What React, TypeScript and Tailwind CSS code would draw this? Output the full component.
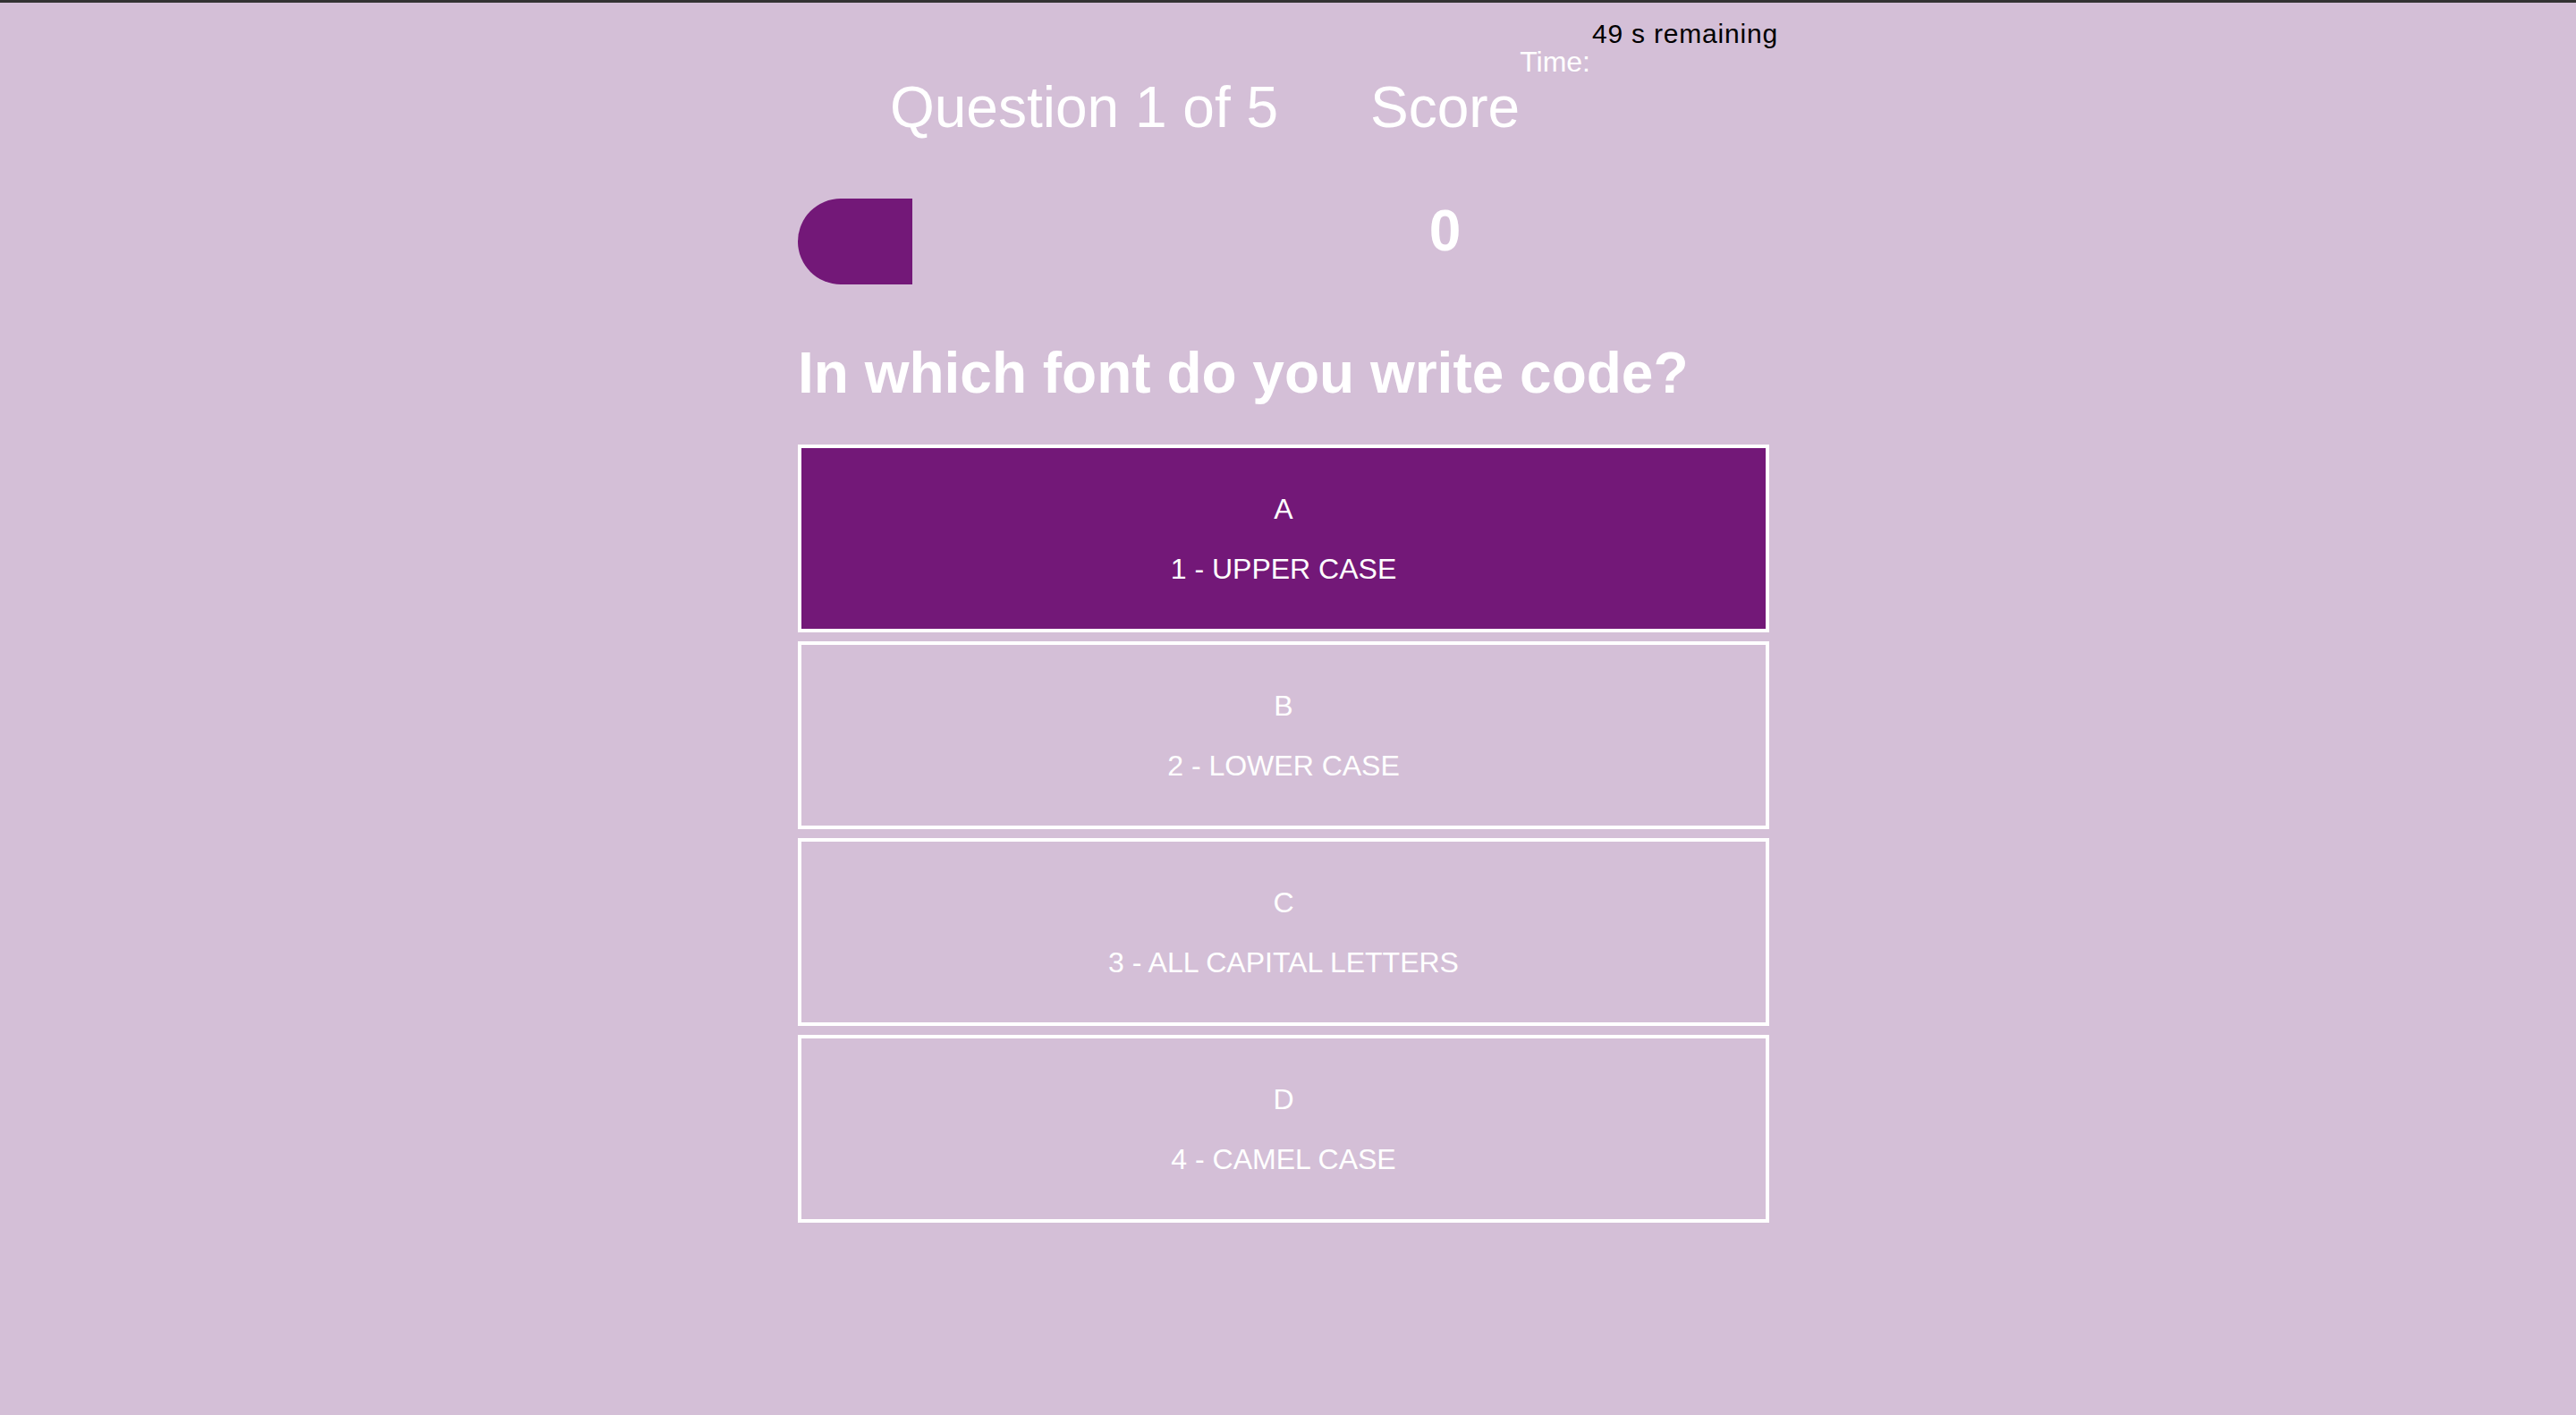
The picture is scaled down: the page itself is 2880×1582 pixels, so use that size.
const choices = [
  { prefix: "A", text: "1 - UPPER CASE" },
  { prefix: "B", text: "2 - LOWER CASE" },
  { prefix: "C", text: "3 - ALL CAPITAL LETTERS" },
  { prefix: "D", text: "4 - CAMEL CASE" },
];

export default function App() {
  const selected = 0;
  const progress = 20;

  return (
    <div className="min-h-screen bg-[#d4bfd7] font-['Liberation_Sans',Arial,sans-serif] text-white">
      <div className="h-[3px] bg-[#323232]" />
      <div className="flex justify-center pr-[10px]">
        <div className="w-[1086px]">
          {/* hud */}
          <div className="flex items-start">
            <div className="w-[640px] shrink-0 pt-[81px]">
              <p className="text-center text-[64px] leading-[1.15]">
                Question 1 of 5
              </p>
              <div className="mt-16 h-[96px] w-[640px]">
                <div
                  className="h-full rounded-l-[48px] bg-[#731878]"
                  style={{ width: `${progress}%` }}
                />
              </div>
            </div>
            <div className="shrink-0 pt-[81px] text-center">
              <p className="text-[64px] leading-[1.15]">Score</p>
              <p className="mt-16 text-[64px] font-bold leading-[1.15]">0</p>
            </div>
            <div className="flex shrink-0 items-start whitespace-nowrap">
              <span className="mt-[48px] text-[32px] leading-[1.15]">Time:</span>
              <span className="ml-[2px] mt-[18px] text-[30px] leading-[1.15] tracking-[0.8px] text-black">
                49 s remaining
              </span>
            </div>
          </div>

          <h2 className="mt-[63px] text-[64px] font-bold leading-[1.15]">
            In which font do you write code?
          </h2>

          <div className="mt-[43px] flex flex-col gap-[10px]">
            {choices.map((c, i) => (
              <div
                key={c.prefix}
                className={`flex h-[210px] flex-col items-center justify-center gap-[30px] border-4 border-white pt-[2px] text-[32px] leading-[37px] ${
                  i === selected ? "bg-[#731878]" : ""
                }`}
              >
                <p>{c.prefix}</p>
                <p>{c.text}</p>
              </div>
            ))}
          </div>
        </div>
      </div>
    </div>
  );
}
